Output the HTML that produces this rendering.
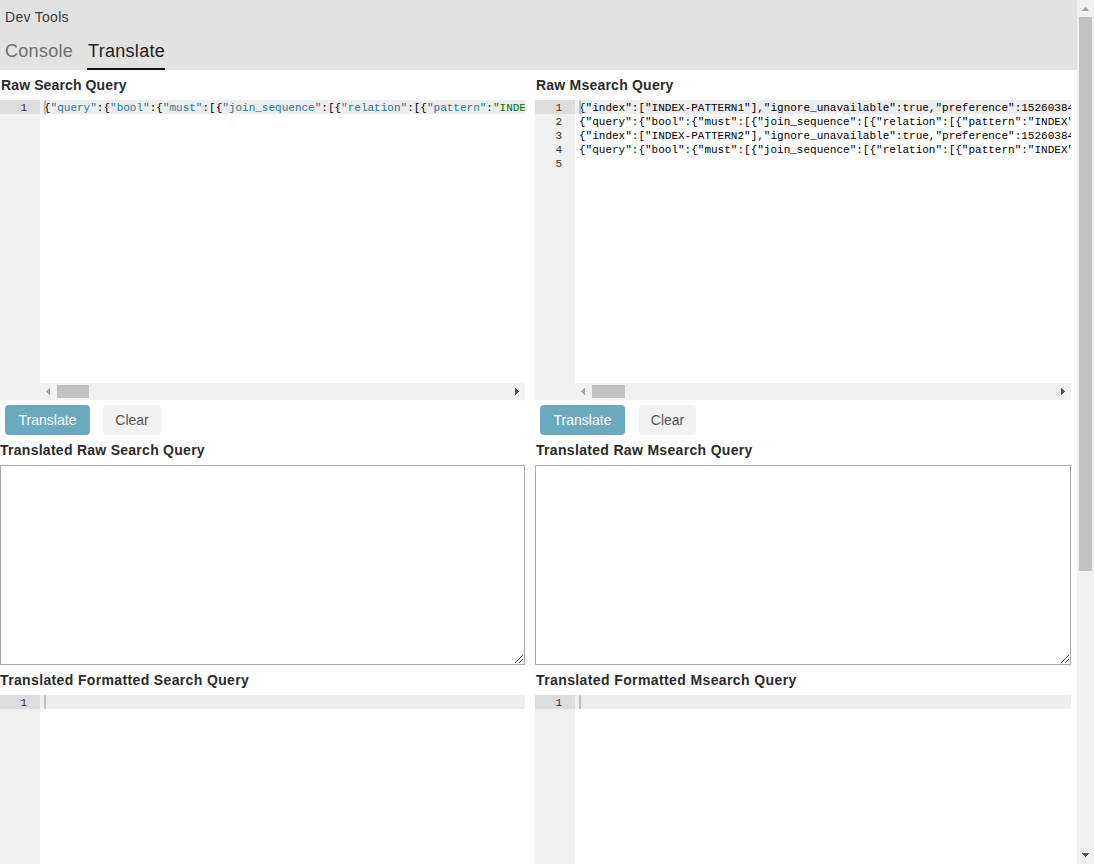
<!DOCTYPE html>
<html><head><meta charset="utf-8">
<style>
html,body{margin:0;padding:0;width:1094px;height:864px;overflow:hidden;background:#fff;}
body{position:relative;font-family:"Liberation Sans",sans-serif;color:#333;}
.abs{position:absolute;}
#hdr{left:0;top:0;width:1077px;height:70px;background:#e2e2e2;}
#title{left:5px;top:9px;font-size:14px;letter-spacing:0.3px;color:#3a3a3a;white-space:nowrap;}
.tab{top:41px;font-size:18px;white-space:nowrap;}
#t1{left:5px;color:#707070;letter-spacing:0.3px;}
#t2{left:88px;color:#222;letter-spacing:0.3px;}
#uline{left:87px;top:68px;width:78px;height:2px;background:#111;}
.lbl{font-size:14px;font-weight:bold;color:#2b2b2b;white-space:nowrap;}
.ed{background:#fff;overflow:hidden;}
.gut{position:absolute;left:0;top:0;width:40px;bottom:0;background:#f0f0f0;}
.gact{position:absolute;left:0;width:40px;height:14px;background:#dcdcdc;}
.lact{position:absolute;left:40px;right:0;height:14px;background:#ededed;}
.lact:before{content:"";position:absolute;left:0;top:0;width:4px;height:14px;background:#f0f0f0;}
.cur{position:absolute;left:44px;width:2px;height:14px;background:#bfbfbf;}
.ln{position:absolute;left:0;width:27px;text-align:right;font-family:"Liberation Mono",monospace;font-size:11px;line-height:14px;height:14px;color:#333;padding-top:1px;}
.code{position:absolute;left:44px;padding-top:1px;font-family:"Liberation Mono",monospace;font-size:11px;line-height:14px;white-space:pre;color:#000;}
.k{color:#1c7890;}
.s{color:#087008;}
.hsb{position:absolute;left:40px;right:0;height:17px;background:#f1f1f1;}
.thumb{position:absolute;background:#c1c1c1;top:2px;height:13px;}
.btn{height:30px;border-radius:4px;font-size:14px;line-height:30px;text-align:center;white-space:nowrap;}
.bp{background:#6aa9be;color:#fff;}
.bc{background:#f2f2f2;color:#555;}
.ta{border:1px solid #a9a9a9;box-sizing:border-box;margin:0;padding:0;background:#fff;resize:none;outline:none;}
#vsb{left:1077px;top:0;width:17px;height:864px;background:#f1f1f1;}
#vthumb{left:2px;top:17px;width:13px;height:554px;background:#c1c1c1;}
</style></head><body>
<div id="hdr" class="abs"></div>
<div id="title" class="abs">Dev Tools</div>
<div id="t1" class="abs tab">Console</div>
<div id="t2" class="abs tab">Translate</div>
<div id="uline" class="abs"></div>

<!-- LEFT COLUMN -->
<div class="abs lbl" style="left:1px;top:77px;letter-spacing:0.12px;">Raw Search Query</div>
<div class="abs ed" style="left:0;top:100px;width:525px;height:300px;">
  <div class="gut"></div>
  <div class="gact" style="top:0"></div>
  <div class="lact" style="top:0"></div>
  <div class="ln" style="top:0">1</div>
  <div class="code" style="top:0">{<span class="k">"query"</span>:{<span class="k">"bool"</span>:{<span class="k">"must"</span>:[{<span class="k">"join_sequence"</span>:[{<span class="k">"relation"</span>:[{<span class="k">"pattern"</span>:<span class="s">"INDEX"</span>}]}]}]}}}</div>
  <div class="cur" style="top:0"></div>
  <div class="hsb" style="top:283px;"><div class="thumb" style="left:17px;width:32px;"></div></div>
</div>
<div class="abs btn bp" style="left:5px;top:405px;width:85px;">Translate</div>
<div class="abs btn bc" style="left:103px;top:405px;width:58px;">Clear</div>
<div class="abs lbl" style="left:0;top:442px;letter-spacing:0.27px;">Translated Raw Search Query</div>
<textarea class="abs ta" style="left:0;top:465px;width:525px;height:200px;"></textarea>
<div class="abs lbl" style="left:0;top:672px;letter-spacing:0.36px;">Translated Formatted Search Query</div>
<div class="abs ed" style="left:0;top:695px;width:525px;height:169px;">
  <div class="gut"></div>
  <div class="gact" style="top:0"></div>
  <div class="lact" style="top:0"></div>
  <div class="ln" style="top:0">1</div>
  <div class="cur" style="top:0"></div>
</div>

<!-- RIGHT COLUMN -->
<div class="abs lbl" style="left:536px;top:77px;letter-spacing:0.22px;">Raw Msearch Query</div>
<div class="abs ed" style="left:535px;top:100px;width:536px;height:300px;">
  <div class="gut"></div>
  <div class="gact" style="top:0"></div>
  <div class="lact" style="top:0"></div>
  <div class="ln" style="top:0">1</div>
  <div class="ln" style="top:14px">2</div>
  <div class="ln" style="top:28px">3</div>
  <div class="ln" style="top:42px">4</div>
  <div class="ln" style="top:56px">5</div>
  <div class="code" style="top:0">{"index":["INDEX-PATTERN1"],"ignore_unavailable":true,"preference":1526038400000}
{"query":{"bool":{"must":[{"join_sequence":[{"relation":[{"pattern":"INDEX"}]}]}]}}}
{"index":["INDEX-PATTERN2"],"ignore_unavailable":true,"preference":1526038400000}
{"query":{"bool":{"must":[{"join_sequence":[{"relation":[{"pattern":"INDEX"}]}]}]}}}
</div>
  <div class="cur" style="top:0"></div>
  <div class="hsb" style="top:283px;"><div class="thumb" style="left:17px;width:33px;"></div></div>
</div>
<div class="abs btn bp" style="left:540px;top:405px;width:85px;">Translate</div>
<div class="abs btn bc" style="left:639px;top:405px;width:57px;">Clear</div>
<div class="abs lbl" style="left:536px;top:442px;letter-spacing:0.32px;">Translated Raw Msearch Query</div>
<textarea class="abs ta" style="left:535px;top:465px;width:536px;height:200px;"></textarea>
<div class="abs lbl" style="left:536px;top:672px;letter-spacing:0.39px;">Translated Formatted Msearch Query</div>
<div class="abs ed" style="left:535px;top:695px;width:536px;height:169px;">
  <div class="gut"></div>
  <div class="gact" style="top:0"></div>
  <div class="lact" style="top:0"></div>
  <div class="ln" style="top:0">1</div>
  <div class="cur" style="top:0"></div>
</div>

<!-- page scrollbar -->
<div id="vsb" class="abs"><div id="vthumb" class="abs"></div></div>

<!-- grips -->
<svg class="abs" style="left:515px;top:655px" width="8" height="8" shape-rendering="crispEdges"><g fill="#4a4a4a"><rect x="0" y="7" width="1" height="1"/><rect x="1" y="6" width="1" height="1"/><rect x="2" y="5" width="1" height="1"/><rect x="3" y="4" width="1" height="1"/><rect x="4" y="3" width="1" height="1"/><rect x="5" y="2" width="1" height="1"/><rect x="6" y="1" width="1" height="1"/><rect x="7" y="0" width="1" height="1"/><rect x="4" y="7" width="1" height="1"/><rect x="5" y="6" width="1" height="1"/><rect x="6" y="5" width="1" height="1"/><rect x="7" y="4" width="1" height="1"/></g></svg>
<svg class="abs" style="left:1061px;top:655px" width="8" height="8" shape-rendering="crispEdges"><g fill="#4a4a4a"><rect x="0" y="7" width="1" height="1"/><rect x="1" y="6" width="1" height="1"/><rect x="2" y="5" width="1" height="1"/><rect x="3" y="4" width="1" height="1"/><rect x="4" y="3" width="1" height="1"/><rect x="5" y="2" width="1" height="1"/><rect x="6" y="1" width="1" height="1"/><rect x="7" y="0" width="1" height="1"/><rect x="4" y="7" width="1" height="1"/><rect x="5" y="6" width="1" height="1"/><rect x="6" y="5" width="1" height="1"/><rect x="7" y="4" width="1" height="1"/></g></svg>

<!-- arrows -->
<svg class="abs" style="left:1082px;top:7px" width="7" height="4" shape-rendering="crispEdges"><g fill="#a3a3a3"><rect x="3" y="0" width="1" height="1"/><rect x="2" y="1" width="3" height="1"/><rect x="1" y="2" width="5" height="1"/><rect x="0" y="3" width="7" height="1"/></g></svg>
<svg class="abs" style="left:1082px;top:853px" width="7" height="4" shape-rendering="crispEdges"><g fill="#505050"><rect x="0" y="0" width="7" height="1"/><rect x="1" y="1" width="5" height="1"/><rect x="2" y="2" width="3" height="1"/><rect x="3" y="3" width="1" height="1"/></g></svg>
<svg class="abs" style="left:46px;top:388px" width="4" height="7" shape-rendering="crispEdges"><g fill="#a3a3a3"><rect x="0" y="3" width="1" height="1"/><rect x="1" y="2" width="1" height="3"/><rect x="2" y="1" width="1" height="5"/><rect x="3" y="0" width="1" height="7"/></g></svg>
<svg class="abs" style="left:515px;top:388px" width="4" height="7" shape-rendering="crispEdges"><g fill="#505050"><rect x="0" y="0" width="1" height="7"/><rect x="1" y="1" width="1" height="5"/><rect x="2" y="2" width="1" height="3"/><rect x="3" y="3" width="1" height="1"/></g></svg>
<svg class="abs" style="left:581px;top:388px" width="4" height="7" shape-rendering="crispEdges"><g fill="#a3a3a3"><rect x="0" y="3" width="1" height="1"/><rect x="1" y="2" width="1" height="3"/><rect x="2" y="1" width="1" height="5"/><rect x="3" y="0" width="1" height="7"/></g></svg>
<svg class="abs" style="left:1061px;top:388px" width="4" height="7" shape-rendering="crispEdges"><g fill="#505050"><rect x="0" y="0" width="1" height="7"/><rect x="1" y="1" width="1" height="5"/><rect x="2" y="2" width="1" height="3"/><rect x="3" y="3" width="1" height="1"/></g></svg>
</body></html>
